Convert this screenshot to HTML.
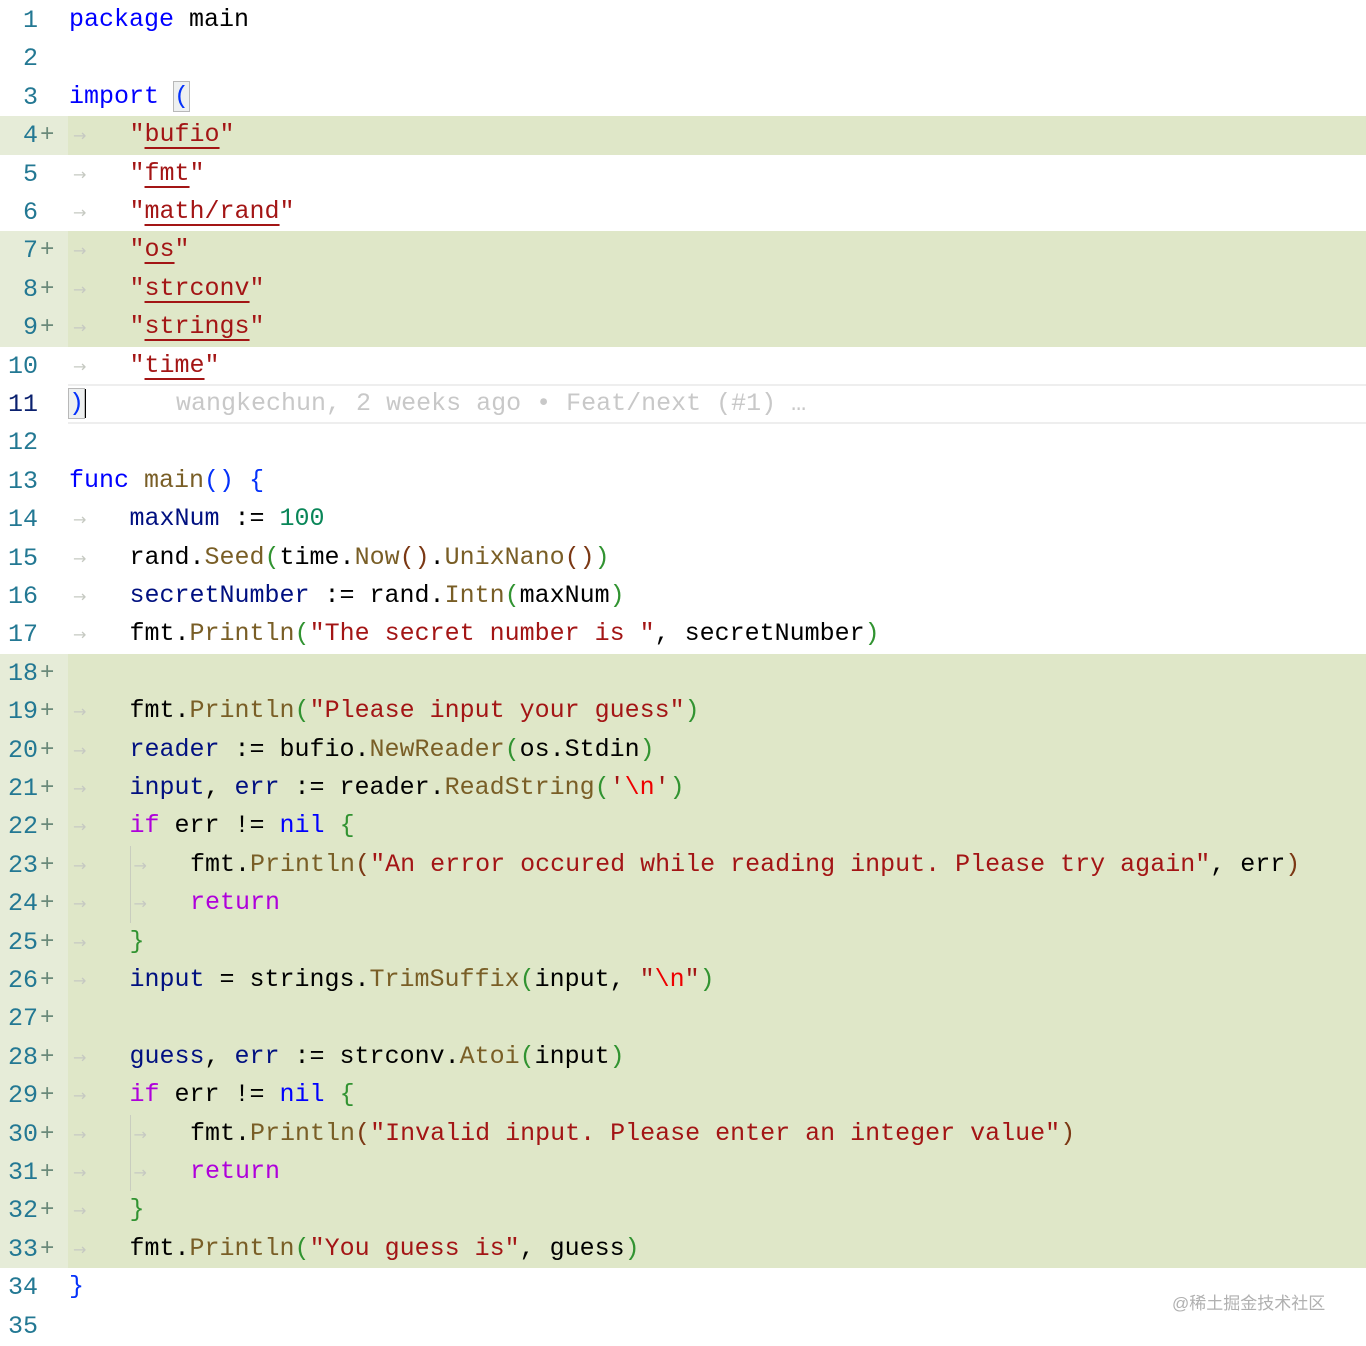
<!DOCTYPE html>
<html><head><meta charset="utf-8"><style>
body{margin:0;width:1366px;height:1344px;background:#fff;overflow:hidden;position:relative;font-family:"Liberation Mono",monospace;font-size:25px}
.l{position:absolute;left:0;width:1366px;height:38.4px;line-height:38.4px;white-space:pre}
.add .code{background:#dfe7c8}
.add .g{background:#e6ecd8}
.g{position:absolute;left:0;top:0;width:68px;height:100%}
.n{position:absolute;right:30px;color:#237893;text-align:right;top:1px}
.p{position:absolute;left:40px;color:#6b8a7a;font-size:24px;top:1px}
.code{position:absolute;left:68px;right:0;top:0;height:100%;padding-left:1px}
.t{display:inline-block;width:60.5px;height:38.4px;line-height:38.4px;vertical-align:top;position:relative;color:#c6c9c2}
.t::before{content:"→";position:absolute;left:4px;top:1px;font-size:16px;line-height:38.4px;font-family:"DejaVu Sans",sans-serif}
.tg::after{content:"";position:absolute;left:0;top:0;bottom:0;width:1px;background:#c9cdbf}
.k{color:#0000ff}.s{color:#a31515}.f{color:#795e26}.v{color:#001080}.num{color:#098658}.r{color:#af00db}
.b1{color:#0431fa}.b2{color:#319331}.b3{color:#7b3814}.e{color:#ee0000}
.u{text-decoration:underline;text-decoration-color:#a31515;text-underline-offset:6px;text-decoration-thickness:2px}
</style></head><body>
<div class="l" style="top:1px"><div class="g"><span class="n">1</span></div><div class="code"><span class="k">package</span> main</div></div>
<div class="l" style="top:39.4px"><div class="g"><span class="n">2</span></div><div class="code"></div></div>
<div class="l" style="top:77.8px"><div class="g"><span class="n">3</span></div><div class="code"><span class="k">import</span> <span class="b1" style="outline:1px solid #b8b8b8;background:#eef0f0">(</span></div></div>
<div class="l add" style="top:116.2px"><div class="g"><span class="n">4</span><span class="p">+</span></div><div class="code"><span class="t"></span><span class="s">"<span class="u">bufio</span>"</span></div></div>
<div class="l" style="top:154.6px"><div class="g"><span class="n">5</span></div><div class="code"><span class="t"></span><span class="s">"<span class="u">fmt</span>"</span></div></div>
<div class="l" style="top:193px"><div class="g"><span class="n">6</span></div><div class="code"><span class="t"></span><span class="s">"<span class="u">math/rand</span>"</span></div></div>
<div class="l add" style="top:231.4px"><div class="g"><span class="n">7</span><span class="p">+</span></div><div class="code"><span class="t"></span><span class="s">"<span class="u">os</span>"</span></div></div>
<div class="l add" style="top:269.8px"><div class="g"><span class="n">8</span><span class="p">+</span></div><div class="code"><span class="t"></span><span class="s">"<span class="u">strconv</span>"</span></div></div>
<div class="l add" style="top:308.2px"><div class="g"><span class="n">9</span><span class="p">+</span></div><div class="code"><span class="t"></span><span class="s">"<span class="u">strings</span>"</span></div></div>
<div class="l" style="top:346.6px"><div class="g"><span class="n">10</span></div><div class="code"><span class="t"></span><span class="s">"<span class="u">time</span>"</span></div></div>
<div class="l" style="top:385px"><div class="g"><span class="n" style="color:#0b216f">11</span></div><div class="code" style="border-top:2px solid #eeeeee;border-bottom:2px solid #eeeeee;top:-1px;height:36px;line-height:36px"><span class="b1" style="outline:1px solid #b8b8b8;background:#eef0f0">)</span><span style="border-left:2px solid #000"></span>      <span style="color:#c8c8c8">wangkechun, 2 weeks ago • Feat/next (#1) …</span></div></div>
<div class="l" style="top:423.4px"><div class="g"><span class="n">12</span></div><div class="code"></div></div>
<div class="l" style="top:461.8px"><div class="g"><span class="n">13</span></div><div class="code"><span class="k">func</span> <span class="f">main</span><span class="b1">()</span> <span class="b1">{</span></div></div>
<div class="l" style="top:500.2px"><div class="g"><span class="n">14</span></div><div class="code"><span class="t"></span><span class="v">maxNum</span> := <span class="num">100</span></div></div>
<div class="l" style="top:538.6px"><div class="g"><span class="n">15</span></div><div class="code"><span class="t"></span>rand.<span class="f">Seed</span><span class="b2">(</span>time.<span class="f">Now</span><span class="b3">()</span>.<span class="f">UnixNano</span><span class="b3">()</span><span class="b2">)</span></div></div>
<div class="l" style="top:577px"><div class="g"><span class="n">16</span></div><div class="code"><span class="t"></span><span class="v">secretNumber</span> := rand.<span class="f">Intn</span><span class="b2">(</span>maxNum<span class="b2">)</span></div></div>
<div class="l" style="top:615.4px"><div class="g"><span class="n">17</span></div><div class="code"><span class="t"></span>fmt.<span class="f">Println</span><span class="b2">(</span><span class="s">"The secret number is "</span>, secretNumber<span class="b2">)</span></div></div>
<div class="l add" style="top:653.8px"><div class="g"><span class="n">18</span><span class="p">+</span></div><div class="code"></div></div>
<div class="l add" style="top:692.2px"><div class="g"><span class="n">19</span><span class="p">+</span></div><div class="code"><span class="t"></span>fmt.<span class="f">Println</span><span class="b2">(</span><span class="s">"Please input your guess"</span><span class="b2">)</span></div></div>
<div class="l add" style="top:730.6px"><div class="g"><span class="n">20</span><span class="p">+</span></div><div class="code"><span class="t"></span><span class="v">reader</span> := bufio.<span class="f">NewReader</span><span class="b2">(</span>os.Stdin<span class="b2">)</span></div></div>
<div class="l add" style="top:769px"><div class="g"><span class="n">21</span><span class="p">+</span></div><div class="code"><span class="t"></span><span class="v">input</span>, <span class="v">err</span> := reader.<span class="f">ReadString</span><span class="b2">(</span><span class="s">'<span class="e">\n</span>'</span><span class="b2">)</span></div></div>
<div class="l add" style="top:807.4px"><div class="g"><span class="n">22</span><span class="p">+</span></div><div class="code"><span class="t"></span><span class="r">if</span> err != <span class="k">nil</span> <span class="b2">{</span></div></div>
<div class="l add" style="top:845.8px"><div class="g"><span class="n">23</span><span class="p">+</span></div><div class="code"><span class="t"></span><span class="t tg"></span>fmt.<span class="f">Println</span><span class="b3">(</span><span class="s">"An error occured while reading input. Please try again"</span>, err<span class="b3">)</span></div></div>
<div class="l add" style="top:884.2px"><div class="g"><span class="n">24</span><span class="p">+</span></div><div class="code"><span class="t"></span><span class="t tg"></span><span class="r">return</span></div></div>
<div class="l add" style="top:922.6px"><div class="g"><span class="n">25</span><span class="p">+</span></div><div class="code"><span class="t"></span><span class="b2">}</span></div></div>
<div class="l add" style="top:961px"><div class="g"><span class="n">26</span><span class="p">+</span></div><div class="code"><span class="t"></span><span class="v">input</span> = strings.<span class="f">TrimSuffix</span><span class="b2">(</span>input, <span class="s">"<span class="e">\n</span>"</span><span class="b2">)</span></div></div>
<div class="l add" style="top:999.4px"><div class="g"><span class="n">27</span><span class="p">+</span></div><div class="code"></div></div>
<div class="l add" style="top:1037.8px"><div class="g"><span class="n">28</span><span class="p">+</span></div><div class="code"><span class="t"></span><span class="v">guess</span>, <span class="v">err</span> := strconv.<span class="f">Atoi</span><span class="b2">(</span>input<span class="b2">)</span></div></div>
<div class="l add" style="top:1076.2px"><div class="g"><span class="n">29</span><span class="p">+</span></div><div class="code"><span class="t"></span><span class="r">if</span> err != <span class="k">nil</span> <span class="b2">{</span></div></div>
<div class="l add" style="top:1114.6px"><div class="g"><span class="n">30</span><span class="p">+</span></div><div class="code"><span class="t"></span><span class="t tg"></span>fmt.<span class="f">Println</span><span class="b3">(</span><span class="s">"Invalid input. Please enter an integer value"</span><span class="b3">)</span></div></div>
<div class="l add" style="top:1153px"><div class="g"><span class="n">31</span><span class="p">+</span></div><div class="code"><span class="t"></span><span class="t tg"></span><span class="r">return</span></div></div>
<div class="l add" style="top:1191.4px"><div class="g"><span class="n">32</span><span class="p">+</span></div><div class="code"><span class="t"></span><span class="b2">}</span></div></div>
<div class="l add" style="top:1229.8px"><div class="g"><span class="n">33</span><span class="p">+</span></div><div class="code"><span class="t"></span>fmt.<span class="f">Println</span><span class="b2">(</span><span class="s">"You guess is"</span>, guess<span class="b2">)</span></div></div>
<div class="l" style="top:1268.2px"><div class="g"><span class="n">34</span></div><div class="code"><span class="b1">}</span></div></div>
<div class="l" style="top:1306.6px"><div class="g"><span class="n">35</span></div><div class="code"></div></div>
<div style="position:absolute;left:1172px;top:1289px;font-family:'Liberation Sans','Noto Sans CJK SC',sans-serif;font-size:17px;color:#b0b0b0">@稀土掘金技术社区</div>
</body></html>
